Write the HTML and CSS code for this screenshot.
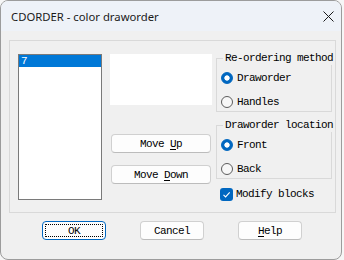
FILE: index.html
```html
<!DOCTYPE html>
<html>
  <head>
    <meta charset="utf-8" />
    <title>CDORDER - color draworder</title>
    <link rel="stylesheet" href="styles.css">
  </head>
  <body>
    <div class="win">
      <div class="titlebar">
        <span class="title">CDORDER - color draworder</span>
        <svg class="close" width="11" height="11" viewBox="0 0 11 11">
          <path d="M0.5 0.5L10.5 10.5M10.5 0.5L0.5 10.5" stroke="#1a1a1a" stroke-width="1" fill="none" />
        </svg>
      </div>

      <div class="panel">
        <div class="listbox">
          <div class="item selected">7</div>
        </div>

        <div class="midcol">
          <div class="preview"></div>
          <button class="btn wide">Move <u>U</u>p</button>
          <button class="btn wide">Move <u>D</u>own</button>
        </div>

        <div class="rightcol">
          <fieldset class="group">
            <legend>Re-ordering method</legend>
            <label class="opt"><span class="radio on"></span>Draworder</label>
            <label class="opt"><span class="radio"></span>Handles</label>
          </fieldset>
          <fieldset class="group second">
            <legend>Draworder location</legend>
            <label class="opt"><span class="radio on"></span>Front</label>
            <label class="opt"><span class="radio"></span>Back</label>
          </fieldset>
          <label class="check">
            <span class="box">
              <svg width="13" height="13" viewBox="0 0 13 13">
                <path d="M3.5 6.8L5.6 8.9L9.7 4.3" stroke="#fff" stroke-width="1.1" fill="none" />
              </svg>
            </span>Modify blocks
          </label>
        </div>
      </div>

      <div class="actions">
        <button class="btn default">OK</button>
        <button class="btn">Cancel</button>
        <button class="btn"><u>H</u>elp</button>
      </div>
    </div>
  </body>
</html>
```

FILE: styles.css
```css
* {
  box-sizing: border-box;
}
body {
  margin: 0;
  background: #f6f6f6;
}

.win {
  width: 342px;
  height: 260px;
  border: 1px solid #9c9c9c;
  border-radius: 8px;
  background: #f0f0f0;
  overflow: hidden;
  font-family: "Liberation Mono", monospace;
  font-size: 11px;
  letter-spacing: -0.6px;
  color: #000;
}

.titlebar {
  height: 30px;
  display: flex;
  align-items: center;
  justify-content: space-between;
  padding: 0 7px 0 10px;
  background: #eef2f8;
}
.title {
  font-family: "Noto Sans", sans-serif;
  font-size: 11.3px;
  letter-spacing: 0;
  color: #1a1a1a;
}

.panel {
  display: flex;
  align-items: flex-start;
  width: 327px;
  height: 173px;
  margin: 9px 0 0 8px;
  padding: 13px 3px 0 8px;
  border: 1px solid #d9d9d9;
}

.listbox {
  width: 84px;
  height: 146px;
  border: 1px solid #7a7a7a;
  background: #fff;
}
.item {
  height: 12px;
  line-height: 12px;
  padding-left: 2px;
}
.selected {
  background: #0078d7;
  color: #fff;
}

.midcol {
  width: 102px;
  margin-left: 8px;
  display: flex;
  flex-direction: column;
  align-items: center;
}
.preview {
  width: 102px;
  height: 51px;
  background: #fff;
}

.btn {
  font-family: inherit;
  font-size: 11px;
  letter-spacing: -0.6px;
  color: #000;
  height: 19px;
  padding: 0;
  background: #fdfdfd;
  border: 1px solid #d0d0d0;
  border-bottom-color: #bcbcbc;
  border-radius: 4px;
}
.btn u {
  text-underline-offset: 2px;
}
.wide {
  width: 100px;
}
.midcol .wide:first-of-type {
  margin-top: 29px;
}
.midcol .wide + .wide {
  margin-top: 12px;
}

.rightcol {
  width: 116px;
  margin: -3px 0 0 4px;
}
.group {
  margin: 0;
  padding: 5px 0 1px 4px;
  border: 1px solid #d9d9d9;
  display: flex;
  flex-direction: column;
  gap: 8px;
  min-width: 0;
}
.group legend {
  margin-left: 2px;
  padding: 0 2px;
  line-height: 14px;
  white-space: nowrap;
}
.second {
  margin-top: 6px;
}

.opt,
.check {
  display: flex;
  align-items: center;
  height: 16px;
}
.radio {
  width: 12px;
  height: 12px;
  border-radius: 50%;
  border: 1px solid #5c5c5c;
  background: #f7f7f7;
  margin-right: 4px;
}
.radio.on {
  border-color: #0067c0;
  background: radial-gradient(circle, #fff 2.3px, #0067c0 3px);
}

.check {
  margin: 7px 0 0 4px;
}
.box {
  width: 13px;
  height: 13px;
  border-radius: 3px;
  background: #0067c0;
  margin-right: 3px;
  display: flex;
}

.actions {
  display: flex;
  gap: 34px;
  padding: 8px 0 0 41px;
}
.actions .btn {
  width: 64px;
}
.default {
  border: 1px solid #0067c0;
  outline: 1px dotted #000;
  outline-offset: -4px;
}
```
